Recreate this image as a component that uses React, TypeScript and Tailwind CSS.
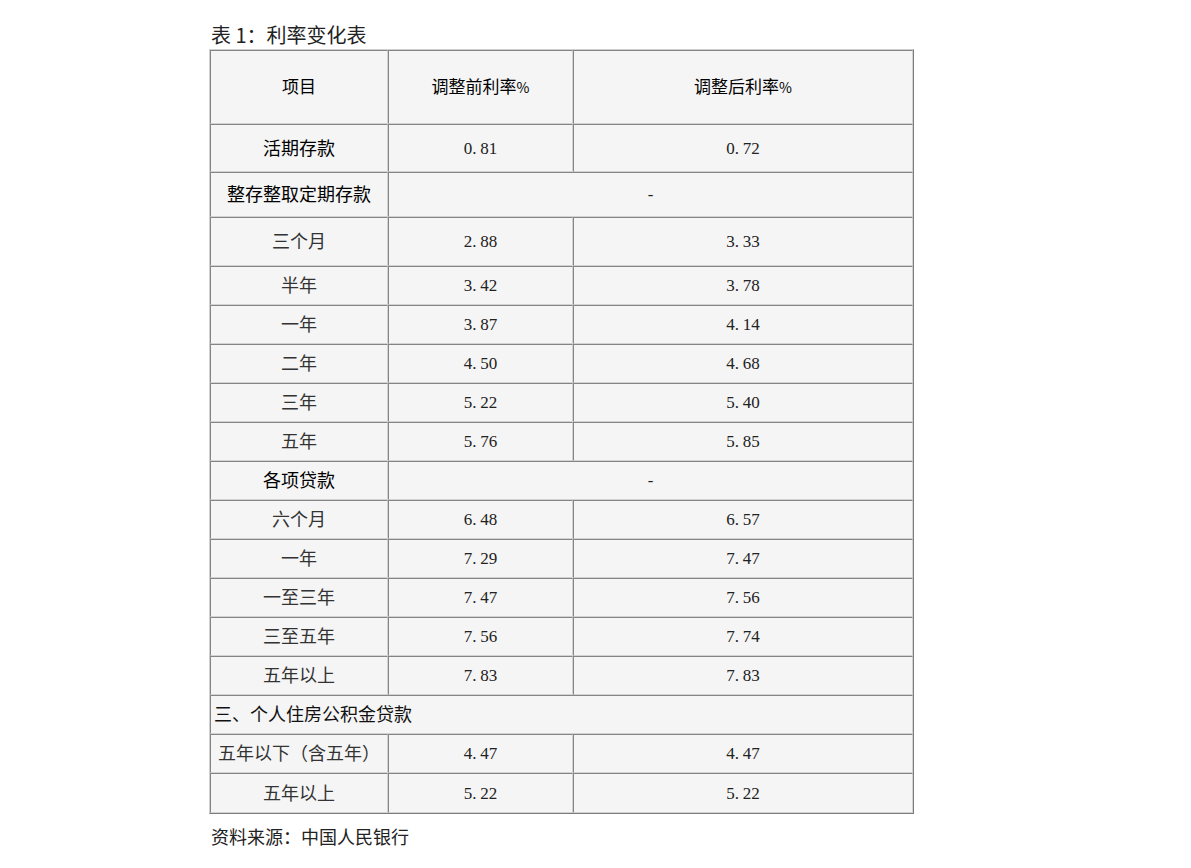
const cjk = { fontFamily: '"Noto Sans CJK SC", "Noto Sans", sans-serif' }

type Row =
  | { kind: 'data'; label: string; before: string; after: string; h: number; strong?: boolean }
  | { kind: 'group'; label: string; h: number }
  | { kind: 'section'; label: string; h: number }

const rows: Row[] = [
  { kind: 'data', label: '活期存款', before: '0.81', after: '0.72', h: 48, strong: true },
  { kind: 'group', label: '整存整取定期存款', h: 45 },
  { kind: 'data', label: '三个月', before: '2.88', after: '3.33', h: 49 },
  { kind: 'data', label: '半年', before: '3.42', after: '3.78', h: 39 },
  { kind: 'data', label: '一年', before: '3.87', after: '4.14', h: 39 },
  { kind: 'data', label: '二年', before: '4.50', after: '4.68', h: 39 },
  { kind: 'data', label: '三年', before: '5.22', after: '5.40', h: 39 },
  { kind: 'data', label: '五年', before: '5.76', after: '5.85', h: 39 },
  { kind: 'group', label: '各项贷款', h: 39 },
  { kind: 'data', label: '六个月', before: '6.48', after: '6.57', h: 39 },
  { kind: 'data', label: '一年', before: '7.29', after: '7.47', h: 39 },
  { kind: 'data', label: '一至三年', before: '7.47', after: '7.56', h: 39 },
  { kind: 'data', label: '三至五年', before: '7.56', after: '7.74', h: 39 },
  { kind: 'data', label: '五年以上', before: '7.83', after: '7.83', h: 39 },
  { kind: 'section', label: '三、个人住房公积金贷款', h: 39 },
  { kind: 'data', label: '五年以下（含五年）', before: '4.47', after: '4.47', h: 39 },
  { kind: 'data', label: '五年以上', before: '5.22', after: '5.22', h: 40 },
]

const cell =
  'border border-t-[#858585] border-l-[#858585] border-r-[#d2d2d2] border-b-[#d2d2d2] bg-[#f5f5f5] px-0 pt-0 pb-[3px] align-middle'

// digits drawn like a half-width song face: every glyph, the point too, takes 0.5em
const Num: React.FC<{ v: string }> = ({ v }) => (
  <span
    className="inline-block text-[17px] leading-[20px] text-[#222]"
    style={{ fontFamily: '"Liberation Serif", "DejaVu Serif", serif' }}
  >
    {v.split('').map((ch, i) => (
      <span key={i} className={ch === '.' ? 'inline-block w-[8px] text-left' : ''}>
        {ch}
      </span>
    ))}
  </span>
)

export default function App() {
  return (
    <div className="min-h-screen bg-white pl-[209px] pt-[23px] text-black" style={cjk}>
      <div className="pl-[2px] text-[20px] leading-[24px] text-[#222]">表 1：利率变化表</div>
      <table className="mt-[2px] w-[705px] table-fixed border-separate border-spacing-0 border border-t-[#cfcfcf] border-l-[#cfcfcf] border-r-[#7c7c7c] border-b-[#7c7c7c]">
        <colgroup>
          <col className="w-[178px]" />
          <col className="w-[185px]" />
          <col />
        </colgroup>
        <tbody>
          <tr className="h-[74px]">
            <td className={`${cell} text-center text-[17px]`}>项目</td>
            <td className={`${cell} text-center text-[17px]`}>
              调整前利率<span className="text-[14px]">%</span>
            </td>
            <td className={`${cell} text-center text-[17px]`}>
              调整后利率<span className="text-[14px]">%</span>
            </td>
          </tr>
          {rows.map((r, i) => {
            if (r.kind === 'group') {
              return (
                <tr key={i} style={{ height: r.h }}>
                  <td className={`${cell} text-center text-[18px] leading-[22px]`}>{r.label}</td>
                  <td colSpan={2} className={`${cell} text-center`}>
                    <Num v="-" />
                  </td>
                </tr>
              )
            }
            if (r.kind === 'section') {
              return (
                <tr key={i} style={{ height: r.h }}>
                  <td colSpan={3} className={`${cell} pl-[3px] text-left text-[18px] leading-[22px] text-[#111]`}>
                    {r.label}
                  </td>
                </tr>
              )
            }
            return (
              <tr key={i} style={{ height: r.h }}>
                <td
                  className={`${cell} text-center text-[18px] leading-[22px] ${r.strong ? 'text-black' : 'text-[#333]'}`}
                >
                  {r.label}
                </td>
                <td className={`${cell} text-center`}>
                  <Num v={r.before} />
                </td>
                <td className={`${cell} text-center`}>
                  <Num v={r.after} />
                </td>
              </tr>
            )
          })}
        </tbody>
      </table>
      <div className="mt-[10px] pl-[2px] text-[18px] leading-[24px] text-[#222]">资料来源：中国人民银行</div>
    </div>
  )
}
